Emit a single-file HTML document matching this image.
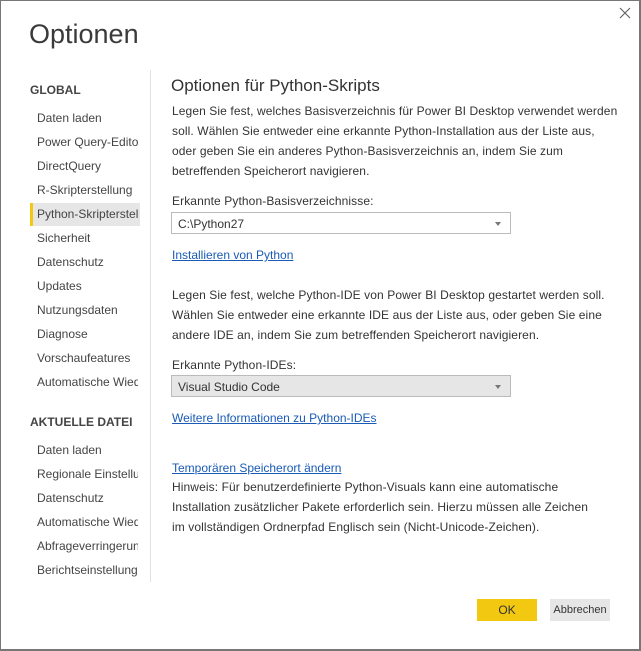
<!DOCTYPE html>
<html><head><meta charset="utf-8"><style>
*{margin:0;padding:0;box-sizing:border-box}
body{width:641px;height:651px;background:#fff;font-family:"Liberation Sans",sans-serif;color:#333;position:relative;overflow:hidden}
.frame{position:absolute;left:0;top:0;width:641px;height:651px;border:1px solid #777;border-bottom-width:2px;border-right-width:2px}
.a{position:absolute;white-space:nowrap}
.t{font-size:27px;color:#3a3a3a;left:29px;top:19px;font-weight:300}
.h{font-size:12px;font-weight:bold;color:#444;left:30px}
.i{font-size:12px;left:37px;width:101px;overflow:hidden;color:#444}
.sel{position:absolute;left:30px;top:203px;width:110px;height:23px;background:#e6e6e6;border-left:3px solid #f2c811}
.sep{position:absolute;left:150px;top:70px;width:1px;height:512px;background:#e1e1e1}
.p{font-size:12px;left:172px;color:#333;line-height:20px;letter-spacing:0.1px}
.lk{font-size:12px;left:172px;color:#1a5bb5;text-decoration:underline}
.dd{position:absolute;left:171px;width:340px;height:22px;border:1px solid #bbb;font-size:12px;padding:4px 0 0 6px;color:#333}
.dd:after{content:"";position:absolute;right:9px;top:9px;border:3px solid transparent;border-top:4px solid #777}
.btn{position:absolute;top:599px;width:60px;height:22px;font-size:12px;text-align:center;line-height:22px;color:#333}
</style></head><body>
<div class="frame"></div>
<svg class="a" style="left:619px;top:7px" width="12" height="12"><path d="M1 1L11 11M11 1L1 11" stroke="#666" stroke-width="1.2"/></svg>
<div class="a t">Optionen</div>
<div class="a h" style="top:83px">GLOBAL</div>
<div class="sel"></div>
<div class="a i" style="top:111px">Daten laden</div>
<div class="a i" style="top:135px">Power Query-Editor</div>
<div class="a i" style="top:159px">DirectQuery</div>
<div class="a i" style="top:183px">R-Skripterstellung</div>
<div class="a i" style="top:207px">Python-Skripterstellung</div>
<div class="a i" style="top:231px">Sicherheit</div>
<div class="a i" style="top:255px">Datenschutz</div>
<div class="a i" style="top:279px">Updates</div>
<div class="a i" style="top:303px">Nutzungsdaten</div>
<div class="a i" style="top:327px">Diagnose</div>
<div class="a i" style="top:351px">Vorschaufeatures</div>
<div class="a i" style="top:375px">Automatische Wiederherstellung</div>
<div class="a h" style="top:415px">AKTUELLE DATEI</div>
<div class="a i" style="top:443px">Daten laden</div>
<div class="a i" style="top:467px">Regionale Einstellungen</div>
<div class="a i" style="top:491px">Datenschutz</div>
<div class="a i" style="top:515px">Automatische Wiederherstellung</div>
<div class="a i" style="top:539px">Abfrageverringerung</div>
<div class="a i" style="top:563px">Berichtseinstellungen</div>
<div class="sep"></div>
<div class="a" style="left:171px;top:76px;font-size:17px;color:#333">Optionen für Python-Skripts</div>
<div class="a p" style="top:101px">Legen Sie fest, welches Basisverzeichnis für Power BI Desktop verwendet werden<br>soll. Wählen Sie entweder eine erkannte Python-Installation aus der Liste aus,<br>oder geben Sie ein anderes Python-Basisverzeichnis an, indem Sie zum<br>betreffenden Speicherort navigieren.</div>
<div class="a p" style="top:191px">Erkannte Python-Basisverzeichnisse:</div>
<div class="dd" style="top:212px">C:\Python27</div>
<div class="a lk" style="top:248px">Installieren von Python</div>
<div class="a p" style="top:285px">Legen Sie fest, welche Python-IDE von Power BI Desktop gestartet werden soll.<br>Wählen Sie entweder eine erkannte IDE aus der Liste aus, oder geben Sie eine<br>andere IDE an, indem Sie zum betreffenden Speicherort navigieren.</div>
<div class="a p" style="top:355px">Erkannte Python-IDEs:</div>
<div class="dd" style="top:375px;background:#e6e6e6">Visual Studio Code</div>
<div class="a lk" style="top:411px">Weitere Informationen zu Python-IDEs</div>
<div class="a lk" style="top:461px">Temporären Speicherort ändern</div>
<div class="a p" style="top:477px">Hinweis: Für benutzerdefinierte Python-Visuals kann eine automatische<br>Installation zusätzlicher Pakete erforderlich sein. Hierzu müssen alle Zeichen<br>im vollständigen Ordnerpfad Englisch sein (Nicht-Unicode-Zeichen).</div>
<div class="btn" style="left:477px;background:#f2c811">OK</div>
<div class="btn" style="left:550px;background:#e6e6e6;font-size:11px">Abbrechen</div>
</body></html>
